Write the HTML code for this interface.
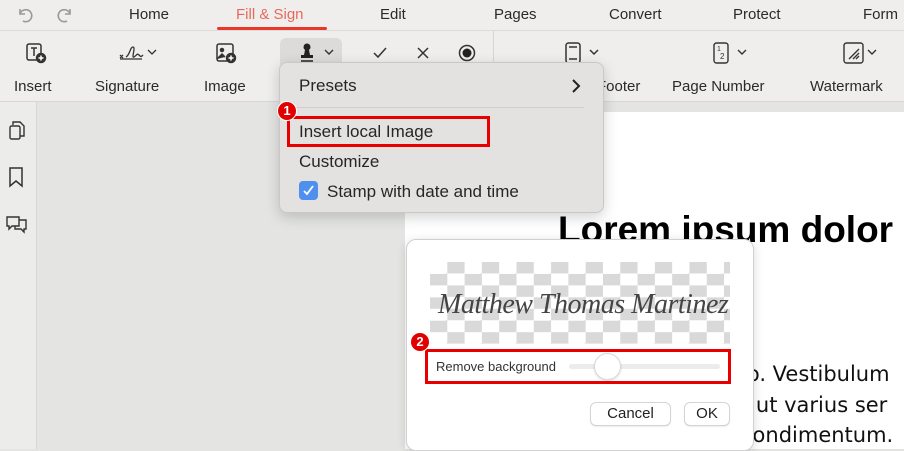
<!DOCTYPE html>
<html><head><meta charset="utf-8"><style>
*{margin:0;padding:0;box-sizing:border-box}
body{width:904px;height:449px;overflow:hidden;position:relative;background:#e4e4e3;font-family:"Liberation Sans",sans-serif;color:#222}
.abs{position:absolute}
.tabs{left:0;top:0;width:904px;height:31px;background:#efeeed;border-bottom:1px solid #dcdbda}
.tab{position:absolute;top:6px;font-size:15px;color:#2a2a2a}
.tools{left:0;top:31px;width:904px;height:71px;background:#efeeed;border-bottom:1px solid #d8d7d6}
.lbl{position:absolute;top:47px;font-size:15px;color:#2a2a2a}
.side{left:0;top:102px;width:37px;height:347px;background:#ececeb;border-right:1px solid #d6d6d5}
.page{left:405px;top:112px;width:499px;height:337px;background:#fff;overflow:hidden}
.menu{left:279px;top:62px;width:325px;height:151px;background:#e3e2e1;border:1px solid #c9c8c7;border-radius:8px;box-shadow:0 4px 14px rgba(0,0,0,.18)}
.mi{position:absolute;left:19px;font-size:17px;color:#262626}
.badge{position:absolute;width:20px;height:20px;border-radius:50%;background:#e10000;border:1.5px solid #fff;color:#fff;font-size:13px;font-weight:bold;text-align:center;line-height:17px}
.dlg{left:406px;top:239px;width:348px;height:212px;background:#fff;border-radius:10px;border:1px solid #d0d0d0;box-shadow:0 2px 10px rgba(0,0,0,.15)}
.chk{left:430px;top:262px;width:300px;height:82px;background:repeating-conic-gradient(#d9d9d9 0 25%,#fff 0 50%) 0 0/34.6px 23.4px}
.btn{position:absolute;background:#fff;border:1px solid #d4d4d4;border-radius:6px;font-size:15px;text-align:center;line-height:22px;color:#222;box-shadow:0 1px 1px rgba(0,0,0,.08)}
.body{position:absolute;font-family:"DejaVu Sans",sans-serif;font-size:21px;color:#111;white-space:nowrap}
</style></head><body>
<div class="abs tabs">
 <svg class="abs" style="left:16px;top:6px" width="18" height="18" viewBox="0 0 18 18" fill="none" stroke="#999" stroke-width="1.6"><path d="M4 3v5h5"/><path d="M4 8a6 6 0 1 1 3 7"/></svg>
 <svg class="abs" style="left:56px;top:6px" width="18" height="18" viewBox="0 0 18 18" fill="none" stroke="#999" stroke-width="1.6"><path d="M14 3v5h-5"/><path d="M14 8a6 6 0 1 0 -3 7"/></svg>
 <div class="tab" style="left:129px">Home</div>
 <div class="tab" style="left:236px;color:#e8695c">Fill &amp; Sign</div>
 <div class="abs" style="left:217px;top:27px;width:110px;height:3px;background:#e8372b;border-radius:2px"></div>
 <div class="tab" style="left:380px">Edit</div>
 <div class="tab" style="left:494px">Pages</div>
 <div class="tab" style="left:609px">Convert</div>
 <div class="tab" style="left:733px">Protect</div>
 <div class="tab" style="left:863px">Form</div>
</div>
<div class="abs tools">
 <svg class="abs" style="left:25px;top:11px" width="22" height="22" viewBox="0 0 22 22" fill="none" stroke="#333" stroke-width="1.5"><rect x="2" y="2" width="14" height="16" rx="2"/><path d="M6 6h6M9 6v8"/><circle cx="16" cy="16" r="4.5" fill="#333"/><path d="M16 13.5v5M13.5 16h5" stroke="#fff"/></svg>
 <div class="lbl" style="left:14px">Insert</div>
 <svg class="abs" style="left:118px;top:12px" width="40" height="20" viewBox="0 0 40 20" fill="none" stroke="#333" stroke-width="1.3"><path d="M2 12l3 3M5 12l-3 3M8 14c4-2 4-10 7-10s-2 12 1 10 3-4 5-2 2 2 4 0"/><path d="M2 16h22"/><path d="M30 7l4 4 4-4"/></svg>
 <div class="lbl" style="left:95px">Signature</div>
 <svg class="abs" style="left:215px;top:11px" width="22" height="22" viewBox="0 0 22 22" fill="none" stroke="#333" stroke-width="1.5"><rect x="2" y="2" width="16" height="17" rx="2"/><circle cx="7" cy="8" r="1.5" fill="#333"/><path d="M2 17l5-5 3 3" fill="#333"/><circle cx="16" cy="16" r="4.5" fill="#333"/><path d="M16 13.5v5M13.5 16h5" stroke="#fff"/></svg>
 <div class="lbl" style="left:204px">Image</div>
 <div class="abs" style="left:280px;top:7px;width:62px;height:32px;background:#dcdbda;border-radius:6px"></div>
 <svg class="abs" style="left:300px;top:11px" width="40" height="22" viewBox="0 0 40 22" fill="none"><circle cx="7" cy="5" r="3.5" fill="#222"/><path d="M5 8h4l1 5H4z" fill="#222"/><rect x="1" y="13" width="12" height="3" fill="#222"/><path d="M1 19h12" stroke="#222" stroke-width="1.5"/><path d="M25 8l4 4 4-4" stroke="#333" stroke-width="1.4"/></svg>
 <svg class="abs" style="left:372px;top:15px" width="16" height="14" viewBox="0 0 16 14" fill="none" stroke="#333" stroke-width="1.5"><path d="M2 7l4 4 8-9"/></svg>
 <svg class="abs" style="left:417px;top:16px" width="12" height="12" viewBox="0 0 12 12" stroke="#333" stroke-width="1.5"><path d="M1 1l10 10M11 1L1 11"/></svg>
 <svg class="abs" style="left:458px;top:13px" width="18" height="18" viewBox="0 0 18 18"><circle cx="9" cy="9" r="7.5" fill="none" stroke="#333" stroke-width="1.5"/><circle cx="9" cy="9" r="4.5" fill="#222"/></svg>
 <div class="abs" style="left:493px;top:0;width:1px;height:70px;background:#d6d5d4"></div>
 <svg class="abs" style="left:564px;top:11px" width="38" height="22" viewBox="0 0 38 22" fill="none" stroke="#333" stroke-width="1.5"><rect x="2" y="1" width="14" height="20" rx="2.5"/><path d="M5 5h8M5 17h8"/><path d="M26 8l4 4 4-4"/></svg>
 <div class="lbl" style="left:597px">Footer</div>
 <svg class="abs" style="left:712px;top:11px" width="40" height="22" viewBox="0 0 40 22" fill="none" stroke="#333" stroke-width="1.4"><rect x="2" y="1" width="14" height="20" rx="2.5"/><text x="5" y="9" font-size="7" fill="#333" stroke="none" font-family="Liberation Sans">1</text><text x="8" y="17" font-size="8" fill="#333" stroke="none" font-family="Liberation Sans">2</text><path d="M26 8l4 4 4-4"/></svg>
 <div class="lbl" style="left:672px">Page Number</div>
 <svg class="abs" style="left:842px;top:11px" width="38" height="22" viewBox="0 0 38 22" fill="none" stroke="#333" stroke-width="1.4"><rect x="2" y="1" width="19" height="20" rx="2.5"/><path d="M7 17L17 7M11 17l6-6M14 17l3-3"/><path d="M26 8l4 4 4-4"/></svg>
 <div class="lbl" style="left:810px">Watermark</div>
</div>
<div class="abs side">
 <svg class="abs" style="left:7px;top:18px" width="20" height="22" viewBox="0 0 20 22" fill="none" stroke="#333" stroke-width="1.4"><path d="M6 5V2h7l4 4v10h-4"/><rect x="3" y="6" width="10" height="13" rx="1.5"/></svg>
 <svg class="abs" style="left:8px;top:64px" width="16" height="22" viewBox="0 0 16 22" fill="none" stroke="#333" stroke-width="1.5"><path d="M2 2h12v18l-6-5-6 5z"/></svg>
 <svg class="abs" style="left:5px;top:112px" width="24" height="20" viewBox="0 0 24 20" fill="none" stroke="#333" stroke-width="1.4"><path d="M2 3h12v9H7l-3 3v-3H2z"/><path d="M14 6h7v9h-2v3l-3-3h-6v-3"/></svg>
</div>
<div class="abs page">
 <div class="abs" style="left:153px;top:97px;font-size:37px;font-weight:bold;color:#000;white-space:nowrap">Lorem ipsum dolor s</div>
 <div class="body" style="left:336px;top:250px">io. Vestibulum</div>
 <div class="body" style="left:336px;top:281px">t ut varius ser</div>
 <div class="body" style="left:336px;top:311px">condimentum.</div>
</div>
<div class="abs menu">
 <div class="mi" style="top:13px">Presets</div>
 <svg class="abs" style="left:291px;top:15px" width="10" height="16" viewBox="0 0 10 16" fill="none" stroke="#222" stroke-width="2"><path d="M2 2l6 6-6 6"/></svg>
 <div class="abs" style="left:8px;top:44px;width:296px;height:1px;background:#cfcecd"></div>
 <div class="mi" style="top:59px">Insert local Image</div>
 <div class="mi" style="top:89px">Customize</div>
 <div class="abs" style="left:19px;top:118px;width:19px;height:19px;border-radius:4px;background:#4f90ee"></div>
 <svg class="abs" style="left:22px;top:121px" width="13" height="13" viewBox="0 0 13 13" fill="none" stroke="#fff" stroke-width="1.8"><path d="M2 7l3 3 6-8"/></svg>
 <div class="mi" style="left:47px;top:119px">Stamp with date and time</div>
</div>
<div class="abs" style="left:287px;top:116px;width:203px;height:31px;border:3px solid #e80000"></div>
<div class="badge" style="left:277px;top:101px">1</div>
<div class="abs dlg"></div>
<div class="abs chk"></div>
<div class="abs" style="left:438px;top:289px;font-family:'Liberation Serif',serif;font-style:italic;font-size:28px;color:#444;white-space:nowrap;letter-spacing:-0.5px">Matthew Thomas Martinez</div>
<div class="abs" style="left:425px;top:349px;width:306px;height:35px;border:3px solid #e80000"></div>
<div class="badge" style="left:410px;top:332px">2</div>
<div class="abs" style="left:436px;top:359px;font-size:13px;color:#333">Remove background</div>
<div class="abs" style="left:569px;top:364px;width:151px;height:5px;border-radius:3px;background:#ececec"></div>
<div class="abs" style="left:594px;top:353px;width:27px;height:27px;border-radius:50%;background:#fff;border:1px solid #d8d8d8;box-shadow:0 1px 2px rgba(0,0,0,.15)"></div>
<div class="btn" style="left:590px;top:402px;width:81px;height:24px">Cancel</div>
<div class="btn" style="left:684px;top:402px;width:46px;height:24px">OK</div>
</body></html>
